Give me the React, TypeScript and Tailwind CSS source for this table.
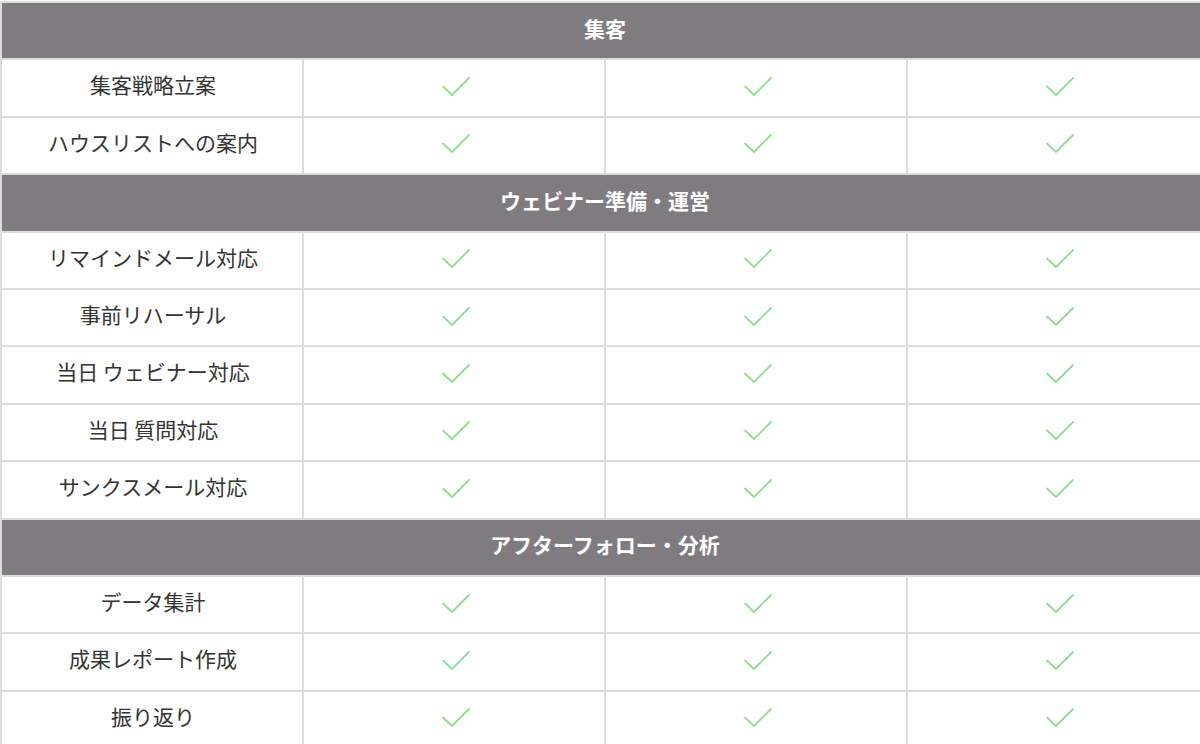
import { Fragment } from "react";

const SECTIONS: { title: string; items: string[] }[] = [
  { title: "集客", items: ["集客戦略立案", "ハウスリストへの案内"] },
  {
    title: "ウェビナー準備・運営",
    items: ["リマインドメール対応", "事前リハーサル", "当日 ウェビナー対応", "当日 質問対応", "サンクスメール対応"],
  },
  { title: "アフターフォロー・分析", items: ["データ集計", "成果レポート作成", "振り返り"] },
];

function Check() {
  return (
    <svg width="28" height="22" viewBox="0 0 28 22" fill="none" aria-hidden="true">
      <polyline
        points="1,10.5 10,19 27,2"
        stroke="#93dc96"
        strokeWidth="1.8"
        strokeLinecap="round"
        strokeLinejoin="round"
      />
    </svg>
  );
}

export default function App() {
  return (
    <div className="h-[744px] w-[1200px] overflow-hidden bg-white pt-px">
      <table
        className="w-[1210px] table-fixed border-collapse text-[21px] text-[#333]"
        style={{ fontFamily: '"Noto Sans CJK JP", "Noto Sans", sans-serif' }}
      >
        <tbody>
          {SECTIONS.map((section) => (
            <Fragment key={section.title}>
              <tr className="h-[57.4px]">
                <th
                  colSpan={4}
                  className="border-2 border-[#dcdcdc] bg-[#7f7c7f] p-0 pb-1 text-center text-[21px] font-bold text-white"
                >
                  {section.title}
                </th>
              </tr>
              {section.items.map((item) => (
                <tr key={item} className="h-[57.4px]">
                  <td className="border-2 border-[#dcdcdc] p-0 pb-1.5 pl-0.5 text-center">{item}</td>
                  {[0, 1, 2].map((i) => (
                    <td key={i} className="border-2 border-[#dcdcdc] p-0">
                      <div className="flex justify-center pb-0.5 pl-1">
                        <Check />
                      </div>
                    </td>
                  ))}
                </tr>
              ))}
            </Fragment>
          ))}
        </tbody>
      </table>
    </div>
  );
}
